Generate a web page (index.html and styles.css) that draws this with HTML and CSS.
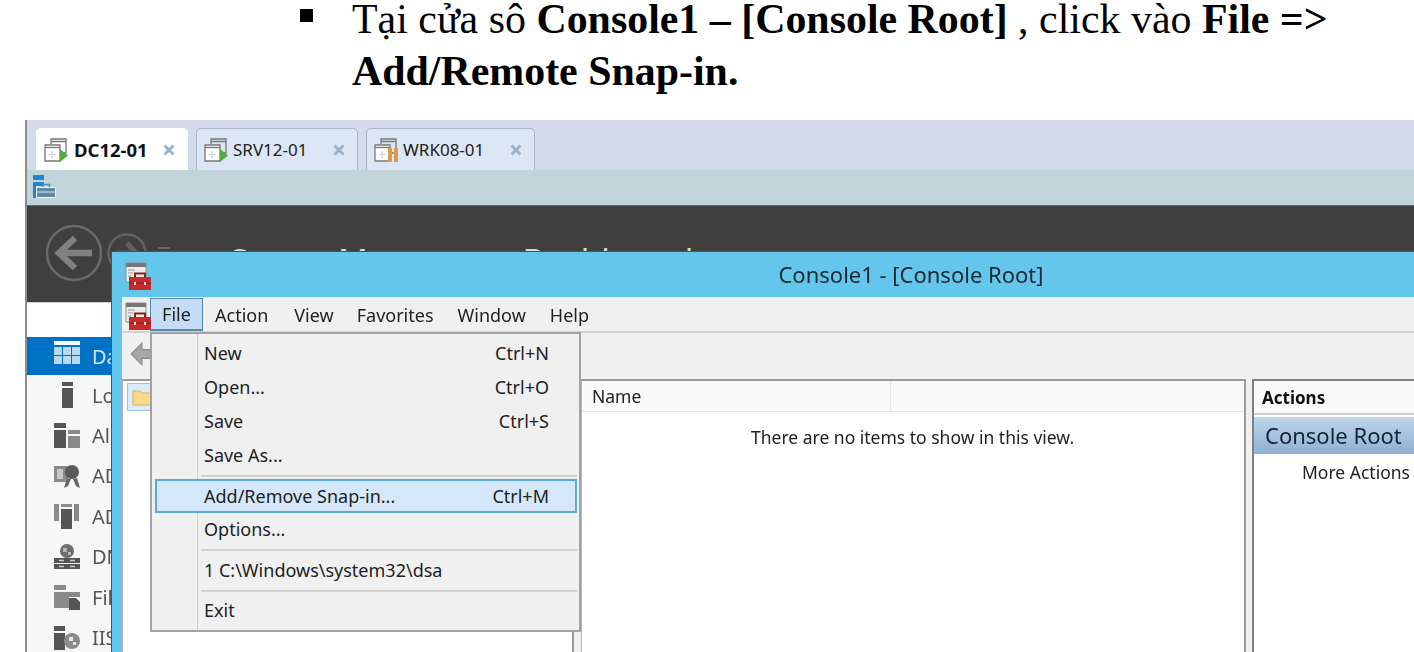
FILE: index.html
```html
<!DOCTYPE html>
<html lang="en">
<head>
    <meta charset="UTF-8">
    <title>Console1 - Add/Remove Snap-in</title>
    <link rel="stylesheet" href="styles.css">
</head>
<body>
    <svg class="defs" width="0" height="0">
        <symbol id="vm" viewBox="0 0 26 26">
            <path d="M8 7V2h15v14h-5M8 4.500h15" fill="none" stroke="#777" stroke-width="1.300"/>
            <path d="M2 8h15v16H2z" fill="#fff" stroke="#777" stroke-width="1.300"/>
            <path d="M2 10.500h15" stroke="#777" stroke-width="1.300"/>
            <path d="M9 14v7M6 17.500h7" stroke="#c2d8cc" stroke-width="1.200"/>
        </symbol>
        <symbol id="close" viewBox="0 0 12 12">
            <path d="M1.500 1.500l9 9M10.500 1.500l-9 9" stroke="#9fb1c8" stroke-width="3"/>
        </symbol>
        <symbol id="toolbox" viewBox="0 0 26 28">
            <path d="M1 1h20v19H1z" fill="#ececec" stroke="#8f8f8f"/>
            <path d="M1 1h20v4H1z" fill="#777"/>
            <path d="M3 8h7M3 11h5M3 14h3" stroke="#999"/>
            <path d="M10 15v-3.500h10V15" fill="none" stroke="#8e1d1d" stroke-width="2"/>
            <path d="M4 15h22v13H4z" fill="#c62a2a"/>
            <path d="M4 21h22" stroke="#8e1d1d" stroke-width="1.200"/>
            <path d="M9 20h2v3H9zM19 20h2v3h-2z" fill="#f1d6d6"/>
        </symbol>
    </svg>

    <ul class="doc">
        <li class="doc-item">
            <span class="doc-bullet"></span>
            <p class="doc-text">Tại cửa sô <b>Console1 – [Console Root]</b> , click vào <b>File =&gt;</b> <b>Add/Remote Snap-in.</b></p>
        </li>
    </ul>

    <div class="shot">
        <div class="tabbar">
            <div class="tab tab-active">
                <svg class="tab-icon" viewBox="0 0 26 26"><use href="#vm"/><path d="M17 12l8 6.500-8 6.500z" fill="#4fae3a"/></svg>
                <span class="tab-name">DC12-01</span>
                <svg class="tab-x" viewBox="0 0 12 12"><use href="#close"/></svg>
            </div>
            <div class="tab">
                <svg class="tab-icon" viewBox="0 0 26 26"><use href="#vm"/><path d="M17 12l8 6.500-8 6.500z" fill="#4fae3a"/></svg>
                <span class="tab-name">SRV12-01</span>
                <svg class="tab-x" viewBox="0 0 12 12"><use href="#close"/></svg>
            </div>
            <div class="tab tab-wide">
                <svg class="tab-icon" viewBox="0 0 26 26"><use href="#vm"/><path d="M15 11h4v14h-4zM21 11h4v14h-4z" fill="#dd9a4a"/></svg>
                <span class="tab-name">WRK08-01</span>
                <svg class="tab-x" viewBox="0 0 12 12"><use href="#close"/></svg>
            </div>
        </div>

        <div class="strip">
            <svg class="strip-icon" viewBox="0 0 23 23">
                <path d="M0 0h11v5H0zM0 7h11v4H3v12H0z" fill="#1f86d0"/>
                <path d="M3.500 12.500h19v10h-19z" fill="#5d88a6" stroke="#eef4f7"/>
                <path d="M9.500 12V9.500h7V12" fill="none" stroke="#5d88a6" stroke-width="1.500"/>
                <path d="M4 17h18" stroke="#e3ecf1"/>
            </svg>
        </div>

        <div class="head">
            <svg class="nav-icon nav-back" viewBox="0 0 58 58">
                <circle cx="29" cy="29" r="27" fill="none" stroke="#6a6a6a" stroke-width="2.500"/>
                <path d="M13 29h34M30 14L14 29l16 15" fill="none" stroke="#808080" stroke-width="6.500"/>
            </svg>
            <svg class="nav-icon nav-next" viewBox="0 0 40 40">
                <circle cx="20" cy="20" r="18.500" fill="none" stroke="#616161" stroke-width="2.500"/>
                <path d="M10 20h18M20 10l9 10-9 10" fill="none" stroke="#616161" stroke-width="5"/>
            </svg>
            <span class="nav-drop"></span>
            <div class="head-title">Server Manager&nbsp;&nbsp;›&nbsp;&nbsp;Dashboard</div>
        </div>

        <div class="lower">
            <div class="side">
                <div class="side-gap"></div>
                <div class="side-item side-active">
                    <svg class="side-icon" viewBox="0 0 26 26"><path d="M0 0h26v4H0z" fill="#fff"/><path d="M0 6h8v8H0zM9 6h8v8H9zM18 6h8v8h-8zM0 15h8v8H0zM9 15h8v8H9zM18 15h8v8h-8z" fill="#b8d9f0"/></svg>
                    <span>Dashboard</span>
                </div>
                <div class="side-item">
                    <svg class="side-icon" viewBox="0 0 26 26"><path d="M8 0h11v4H8z" fill="#555"/><path d="M8 6h11v20H8z" fill="#555"/></svg>
                    <span>Local Server</span>
                </div>
                <div class="side-item">
                    <svg class="side-icon" viewBox="0 0 26 26"><path d="M0 0h12v5H0zM0 7h12v18H0z" fill="#555"/><path d="M14 7h12v4H14zM14 13h12v12H14z" fill="#8a8a8a"/></svg>
                    <span>All Servers</span>
                </div>
                <div class="side-item">
                    <svg class="side-icon" viewBox="0 0 26 26"><path d="M0 3h14v16H0z" fill="#8a8a8a"/><path d="M3 6h6v10H3z" fill="#c8c8c8"/><circle cx="18" cy="9" r="7" fill="#5a5a5a"/><path d="M13 15l-3 10 4-2 3-7zM23 15l3 10-4-2-3-7z" fill="#666"/></svg>
                    <span>AD CS</span>
                </div>
                <div class="side-item">
                    <svg class="side-icon" viewBox="0 0 26 26"><path d="M0 1h5v17H0zM20 1h5v17h-5z" fill="#8a8a8a"/><path d="M7 1h11v3H7z" fill="#8a8a8a"/><path d="M7 6h11v20H7z" fill="#555"/></svg>
                    <span>AD DS</span>
                </div>
                <div class="side-item">
                    <svg class="side-icon" viewBox="0 0 26 26"><circle cx="13" cy="7" r="7" fill="#6d6d6d"/><path d="M9 4h4v4H9zM14 8h3v3h-3z" fill="#b5b5b5"/><path d="M0 14h26v5H0zM0 20h26v5H0z" fill="#555"/><path d="M5 16.500h5M16 16.500h5M5 22.500h5M16 22.500h5" stroke="#ccc" stroke-width="1.400"/></svg>
                    <span>DNS</span>
                </div>
                <div class="side-item">
                    <svg class="side-icon" viewBox="0 0 26 26"><path d="M0 1h12v5H0zM0 8h26v5H15v11H0z" fill="#8a8a8a"/><path d="M15 14h7l4 4v8H15z" fill="#555"/></svg>
                    <span>File and Storage Services</span>
                </div>
                <div class="side-item">
                    <svg class="side-icon" viewBox="0 0 26 26"><path d="M0 1h11v5H0zM0 8h11v17H0z" fill="#555"/><circle cx="18" cy="16" r="8" fill="#8a8a8a"/><path d="M15 12h4v4h-4zM19 17h3v3h-3z" fill="#e4e4e4"/></svg>
                    <span>IIS</span>
                </div>
            </div>
        </div>

        <div class="console">
            <div class="console-title">
                <svg class="box-icon" viewBox="0 0 26 28"><use href="#toolbox"/></svg>
                <span>Console1 - [Console Root]</span>
            </div>
            <div class="console-body">
                <div class="menubar">
                    <svg class="box-icon box-small" viewBox="0 0 26 28"><use href="#toolbox"/></svg>
                    <span class="menu-top menu-open">File</span>
                    <span class="menu-top">Action</span>
                    <span class="menu-top menu-view">View</span>
                    <span class="menu-top">Favorites</span>
                    <span class="menu-top">Window</span>
                    <span class="menu-top">Help</span>
                </div>
                <div class="toolbar">
                    <svg class="tool-back" viewBox="0 0 22 22"><path d="M11 1L1 11l10 10v-6h11V7H11z" fill="#a7a7a7" stroke="#8b8b8b"/></svg>
                </div>
                <div class="panes">
                    <div class="pane tree">
                        <div class="tree-row">
                            <svg class="folder" viewBox="0 0 20 18"><path d="M1 3h7l2 2h9v12H1z" fill="#f7d98c" stroke="#d9b25c"/></svg>
                        </div>
                    </div>
                    <div class="pane list">
                        <div class="list-head"><span class="list-col">Name</span></div>
                        <p class="list-empty">There are no items to show in this view.</p>
                    </div>
                    <div class="pane actions">
                        <div class="actions-head">Actions</div>
                        <div class="actions-group">Console Root</div>
                        <div class="actions-link">More Actions</div>
                    </div>
                </div>
            </div>

            <div class="filemenu">
                <div class="fm-row"><span>New</span><span>Ctrl+N</span></div>
                <div class="fm-row"><span>Open...</span><span>Ctrl+O</span></div>
                <div class="fm-row"><span>Save</span><span>Ctrl+S</span></div>
                <div class="fm-row"><span>Save As...</span></div>
                <div class="fm-sep"></div>
                <div class="fm-row fm-hot"><span>Add/Remove Snap-in...</span><span>Ctrl+M</span></div>
                <div class="fm-row"><span>Options...</span></div>
                <div class="fm-sep"></div>
                <div class="fm-row"><span>1 C:\Windows\system32\dsa</span></div>
                <div class="fm-sep fm-sep-last"></div>
                <div class="fm-row"><span>Exit</span></div>
            </div>
        </div>
    </div>
</body>
</html>
```

FILE: styles.css
```css
html, body {
    margin: 0;
    padding: 0;
    height: 652px;
    overflow: hidden;
    background: #fff;
}
.defs {
    position: absolute;
}

/* document text above the screenshot */
.doc {
    list-style: none;
    margin: 0;
    padding: 0 0 0 300px;
    height: 120px;
    box-sizing: border-box;
    font-family: "Liberation Serif", serif;
    font-size: 41.900px;
    line-height: 52px;
    color: #000;
}
.doc-item {
    display: flex;
}
.doc-bullet {
    flex: none;
    width: 13px;
    height: 13px;
    margin: 9px 39px 0 0;
    background: #000;
}
.doc-text {
    margin: -7px 0 0;
    width: 1020px;
}

/* pasted screenshot */
.shot {
    position: relative;
    margin-left: 25px;
    height: 532px;
    overflow: hidden;
    border-left: 2px solid #8d8d8d;
    font-family: "Noto Sans", sans-serif;
    font-size: 17.500px;
    color: #222;
    filter: blur(0.35px);
}
.tabbar {
    display: flex;
    gap: 8px;
    height: 50px;
    box-sizing: border-box;
    padding: 8px 0 0 9px;
    background: #d4dbec;
}
.tab {
    display: flex;
    align-items: center;
    width: 162px;
    box-sizing: border-box;
    padding: 0 0 0 6px;
    background: #dde6f4;
    border: 1px solid #a8b4c2;
    border-bottom: 0;
    border-radius: 5px 5px 0 0;
    font-size: 17px;
}
.tab-active {
    width: 152px;
    background: #fff;
    border-color: #fff;
    font-size: 18.500px;
    font-weight: 700;
    color: #111;
}
.tab-wide {
    width: 169px;
}
.tab-icon {
    flex: none;
    width: 26px;
    height: 26px;
    margin-right: 4px;
}
.tab-active .tab-icon {
    margin-right: 5px;
}
.tab-name {
    flex: 1;
    white-space: nowrap;
}
.tab-x {
    flex: none;
    width: 12px;
    height: 12px;
    margin-right: 12px;
}
.strip {
    height: 35px;
    box-sizing: border-box;
    padding: 5px 0 0 6px;
    background: #c1d4da;
}
.strip-icon {
    display: block;
    width: 23px;
    height: 23px;
}
.head {
    display: flex;
    height: 97px;
    box-sizing: border-box;
    padding: 18px 0 0 18px;
    overflow: hidden;
    background: #3f3f3f;
    border-top: 1px solid #666;
}
.nav-icon {
    flex: none;
}
.nav-back {
    width: 58px;
    height: 58px;
}
.nav-next {
    width: 40px;
    height: 40px;
    margin: 9px 0 0 4px;
}
.nav-drop {
    flex: none;
    width: 12px;
    height: 2px;
    margin: 23px 0 0 11px;
    background: #666;
}
.head-title {
    height: 28px;
    margin: 0 0 0 60px;
    font-size: 33px;
    line-height: 74px;
    color: #d8d8d8;
    white-space: nowrap;
    overflow: hidden;
}
.lower {
    height: 350px;
}
.side {
    width: 85px;
    height: 100%;
    overflow: hidden;
    background: #f7f7f7;
}
.side-gap {
    height: 35px;
    background: #fff;
    border-top: 1px solid #cfcfcf;
    box-sizing: border-box;
}
.side-item {
    display: flex;
    align-items: center;
    height: 40.400px;
    padding-left: 27px;
    font-size: 20px;
    white-space: nowrap;
    color: #555;
}
.side-active {
    height: 38px;
    background: #0072c6;
    color: #cfe6f7;
}
.side-active .side-icon {
    margin-top: -4px;
}
.side-icon {
    flex: none;
    width: 26px;
    height: 26px;
    margin-right: 12px;
}

/* the Console1 window sits on top of Server Manager */
.console {
    position: absolute;
    left: 84px;
    top: 131px;
    width: 1598px;
    height: 401px;
    box-sizing: border-box;
    padding-left: 10px;
    background: #63c6ea;
    border-top: 1px solid #2f5d70;
    border-left: 1px solid #2f5d70;
}
.console-title {
    display: flex;
    align-items: center;
    justify-content: center;
    height: 45px;
    padding: 0 9px 2px 0;
    box-sizing: border-box;
    font-size: 22px;
    color: #1c2a33;
}
.box-icon {
    position: absolute;
    left: 13px;
    top: 10px;
    width: 26px;
    height: 28px;
}
.box-small {
    top: 50px;
}
.console-body {
    height: 355px;
    background: #f0f0f0;
}
.menubar {
    display: flex;
    align-items: center;
    height: 36px;
    box-sizing: border-box;
    padding-left: 28px;
    font-size: 18px;
    border-bottom: 2px solid #d2d2d2;
    border-top: 1px solid #e8e8e8;
}
.menu-top {
    display: flex;
    align-items: center;
    height: 100%;
    padding: 0 12px;
}
.menu-view {
    padding: 0 11px 0 14px;
}
.menu-open {
    width: 53px;
    box-sizing: border-box;
    justify-content: center;
    padding: 0;
    background: #c4dcf5;
    border: 1px solid #5a88a8;
    border-bottom: 2px solid #5a88a8;
}
.toolbar {
    height: 46px;
    box-sizing: border-box;
    padding: 9px 0 0 8px;
}
.tool-back {
    display: block;
    width: 24px;
    height: 24px;
}
.panes {
    display: flex;
    height: 274px;
}
.pane {
    box-sizing: border-box;
    background: #fff;
    border-top: 2px solid #9a9a9a;
    border-left: 1px solid #b5b5b5;
}
.tree {
    flex: none;
    width: 452px;
    margin-right: 7px;
    border-right: 2px solid #9a9a9a;
}
.tree-row {
    width: 28px;
    height: 28px;
    box-sizing: border-box;
    margin: 2px 0 0 4px;
    padding: 4px 0 0 4px;
    background: #dcebfa;
    border: 1px solid #9dbfe3;
}
.folder {
    display: block;
    width: 20px;
    height: 18px;
}
.list {
    flex: none;
    width: 665px;
    margin-right: 6px;
    border-right: 2px solid #9a9a9a;
}
.list-head {
    height: 30px;
    background: #fafafa;
    border-bottom: 1px solid #e5e5e5;
}
.list-col {
    display: block;
    width: 309px;
    height: 100%;
    box-sizing: border-box;
    padding: 3px 0 0 10px;
    border-right: 1px solid #e5e5e5;
}
.list-empty {
    margin: 13px 0 0;
    padding-left: 169px;
    white-space: nowrap;
}
.actions {
    flex: 1;
    border-top: 2px solid #808080;
    border-left: 2px solid #808080;
}
.actions-head {
    height: 32px;
    line-height: 34px;
    padding-left: 8px;
    font-size: 17px;
    font-weight: 700;
    color: #111;
    background: #fafafa;
    border-bottom: 2px solid #cfcfcf;
}
.actions-group {
    height: 37px;
    line-height: 37px;
    padding-left: 11px;
    margin-top: 2px;
    font-size: 22px;
    color: #14233b;
    background: linear-gradient(#bed6ec, #8fb0d0);
}
.actions-link {
    margin-top: 6px;
    padding-left: 48px;
}

/* File dropdown */
.filemenu {
    position: absolute;
    left: 38px;
    top: 80px;
    width: 431px;
    height: 300px;
    box-sizing: border-box;
    padding: 2px 2px 0 3px;
    font-size: 18px;
    background: #f0f0f0 linear-gradient(#cfcfcf, #cfcfcf) 45px 0 / 1px 100% no-repeat;
    border: 2px solid #a2a2a2;
}
.fm-row {
    display: flex;
    justify-content: space-between;
    align-items: center;
    height: 34px;
    box-sizing: border-box;
    padding: 0 28px 0 49px;
}
.fm-hot {
    height: 34px;
    margin-bottom: -1px;
    background: #d5e8fb;
    border: 2px solid #5aa9d6;
    padding: 0 26px 0 47px;
}
.fm-sep {
    height: 2px;
    margin: 3px 0 2px 46px;
    background: #d2d2d2;
}
.fm-sep-last {
    margin-bottom: 1px;
}
```
